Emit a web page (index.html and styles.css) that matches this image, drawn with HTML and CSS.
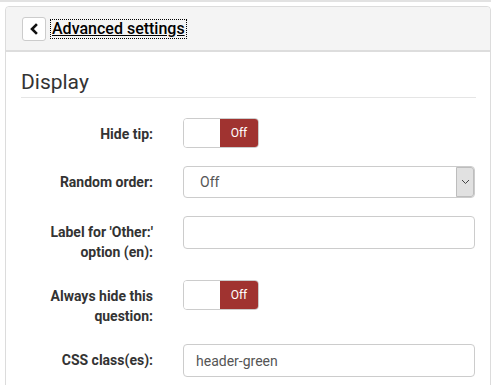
FILE: index.html
```html
<!DOCTYPE html>
<html>
<head>
<meta charset="utf-8">
<link rel="stylesheet" href="styles.css">
</head>
<body>
<div class="prev-panel"></div>
<div class="panel">
  <div class="panel-heading">
    <button class="back-btn" type="button">
      <svg width="10" height="12" viewBox="0 0 10 12"><polyline points="7,2 3,6 7,10" fill="none" stroke="#111" stroke-width="2.6" stroke-linecap="square"/></svg>
    </button>
    <a class="title" href="#">Advanced settings</a>
  </div>
  <div class="panel-body">
    <h2 class="section-title">Display</h2>
    <div class="form">
      <div class="row">
        <label class="label">Hide tip:</label>
        <div class="toggle"><span class="toggle-on"></span><span class="toggle-off">Off</span></div>
      </div>
      <div class="row">
        <label class="label">Random order:</label>
        <div class="select"><span class="select-value">Off</span><span class="select-arrow"><svg width="9" height="6" viewBox="0 0 9 6"><polyline points="1,1 4.5,4.5 8,1" fill="none" stroke="#444" stroke-width="1"/></svg></span></div>
      </div>
      <div class="row">
        <label class="label">Label for 'Other:'<br>option (en):</label>
        <div class="input tall"></div>
      </div>
      <div class="row">
        <label class="label">Always hide this<br>question:</label>
        <div class="toggle"><span class="toggle-on"></span><span class="toggle-off">Off</span></div>
      </div>
      <div class="row">
        <label class="label">CSS class(es):</label>
        <div class="input tall">header-green</div>
      </div>
    </div>
  </div>
</div>
</body>
</html>
```

FILE: styles.css
```css
html, body {
  margin: 0;
  padding: 0;
  background: #fff;
  font-family: Roboto, "Liberation Sans", sans-serif;
  overflow: hidden;
}
.prev-panel {
  width: 491px;
  height: 2px;
  background: #e2e2e2;
}
.panel {
  margin: 4px 0 0 5px;
  width: 484px;
  border: 1px solid #dcdcdc;
  border-radius: 4px 4px 0 0;
  height: 500px;
}
.panel-heading {
  background: #f4f4f4;
  border-bottom: 2px solid #dddddd;
  height: 43px;
  display: flex;
  align-items: center;
  padding: 0 16px;
  border-radius: 4px 4px 0 0;
}
.back-btn {
  width: 24px;
  height: 24px;
  padding: 0;
  background: #fff;
  border: 1px solid #cccccc;
  border-radius: 3px;
  display: flex;
  align-items: center;
  justify-content: center;
  margin-right: 5px;
}
.title {
  font-size: 16px;
  font-weight: 500;
  color: #000;
  text-decoration: underline;
  outline: 1px dotted #000;
  line-height: 18px;
  padding: 0 1px;
}
.panel-body {
  padding: 0 14px 0 15px;
}
.section-title {
  margin: 0;
  font-weight: normal;
  font-size: 21px;
  color: #333;
  padding-top: 17px;
  line-height: 26px;
  padding-bottom: 2px;
  border-bottom: 1px solid #e5e5e5;
}
.form {
  padding-top: 20px;
  display: flex;
  flex-direction: column;
  gap: 18px;
}
.row {
  display: grid;
  grid-template-columns: 132px 292px;
  column-gap: 30px;
  align-items: start;
}
.label {
  text-align: right;
  font-weight: bold;
  font-size: 14px;
  line-height: 20px;
  color: #333;
  padding-top: 6px;
}
.toggle {
  width: 74px;
  height: 28px;
  border: 1px solid #cccccc;
  border-radius: 4px;
  display: flex;
  overflow: hidden;
}
.toggle-on {
  flex: 1;
  background: #fff;
}
.toggle-off {
  width: 38px;
  background: #a03330;
  color: #fff;
  font-size: 12px;
  display: flex;
  align-items: center;
  justify-content: center;
}
.select {
  height: 30px;
  border: 1px solid #cccccc;
  border-radius: 4px;
  display: flex;
  align-items: center;
  justify-content: space-between;
}
.select-value {
  font-size: 14px;
  color: #555;
  padding-left: 16px;
}
.select-arrow {
  width: 16px;
  height: 28px;
  background: #e1e1e1;
  border: 1px solid #bdbdbd;
  display: flex;
  align-items: center;
  justify-content: center;
  border-radius: 0 3px 3px 0;
}
.input {
  height: 31px;
  border: 1px solid #cccccc;
  border-radius: 4px;
  font-size: 14px;
  color: #555;
  padding-left: 12px;
  display: flex;
  align-items: center;
}
```
